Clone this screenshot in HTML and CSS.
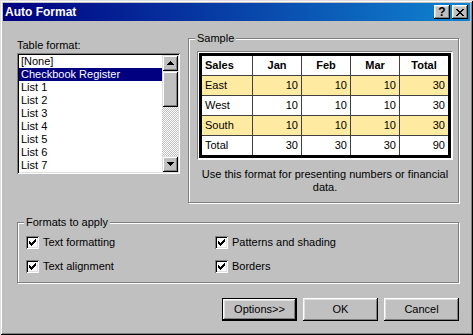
FILE: index.html
```html
<!DOCTYPE html>
<html lang="en">
<head>
    <meta charset="UTF-8">
    <title>Auto Format</title>
    <link rel="stylesheet" href="styles.css">
</head>
<body>
    <div class="window">
        <div class="titlebar">
            <span class="title">Auto Format</span>
            <div class="title-buttons">
                <button class="tbtn">?</button>
                <button class="tbtn">
                    <svg width="8" height="7" viewBox="0 0 8 7" shape-rendering="crispEdges">
                        <path d="M0 0h2v1H0z M6 0h2v1H6z M1 1h2v1H1z M5 1h2v1H5z M2 2h4v1H2z M3 3h2v1H3z M2 4h4v1H2z M1 5h2v1H1z M5 5h2v1H5z M0 6h2v1H0z M6 6h2v1H6z" fill="#000"/>
                    </svg>
                </button>
            </div>
        </div>

        <div class="dialog">
            <div class="top-row">
                <div class="format-col">
                    <label class="field-label">Table format:</label>
                    <div class="listbox">
                        <ul class="list-items">
                            <li>[None]</li>
                            <li class="selected">Checkbook Register</li>
                            <li>List 1</li>
                            <li>List 2</li>
                            <li>List 3</li>
                            <li>List 4</li>
                            <li>List 5</li>
                            <li>List 6</li>
                            <li>List 7</li>
                        </ul>
                        <div class="scrollbar">
                            <div class="scroll-btn">
                                <svg width="7" height="4" viewBox="0 0 7 4" shape-rendering="crispEdges">
                                    <path d="M3 0h1v1H3z M2 1h3v1H2z M1 2h5v1H1z M0 3h7v1H0z" fill="#000"/>
                                </svg>
                            </div>
                            <div class="scroll-thumb"></div>
                            <div class="scroll-track"></div>
                            <div class="scroll-btn">
                                <svg width="7" height="4" viewBox="0 0 7 4" shape-rendering="crispEdges">
                                    <path d="M0 0h7v1H0z M1 1h5v1H1z M2 2h3v1H2z M3 3h1v1H3z" fill="#000"/>
                                </svg>
                            </div>
                        </div>
                    </div>
                </div>

                <div class="group sample-group">
                    <span class="group-title">Sample</span>
                    <div class="sample-frame">
                        <table class="sample-table">
                            <tr>
                                <th class="first">Sales</th>
                                <th>Jan</th>
                                <th>Feb</th>
                                <th>Mar</th>
                                <th>Total</th>
                            </tr>
                            <tr class="hl">
                                <td>East</td>
                                <td class="num">10</td>
                                <td class="num">10</td>
                                <td class="num">10</td>
                                <td class="num">30</td>
                            </tr>
                            <tr>
                                <td>West</td>
                                <td class="num">10</td>
                                <td class="num">10</td>
                                <td class="num">10</td>
                                <td class="num">30</td>
                            </tr>
                            <tr class="hl">
                                <td>South</td>
                                <td class="num">10</td>
                                <td class="num">10</td>
                                <td class="num">10</td>
                                <td class="num">30</td>
                            </tr>
                            <tr>
                                <td>Total</td>
                                <td class="num">30</td>
                                <td class="num">30</td>
                                <td class="num">30</td>
                                <td class="num">90</td>
                            </tr>
                        </table>
                    </div>
                    <p class="sample-note">Use this format for presenting numbers or financial<br>data.</p>
                </div>
            </div>

            <div class="group formats-group">
                <span class="group-title">Formats to apply</span>
                <div class="check-grid">
                    <label class="check">
                        <span class="checkbox"><svg width="7" height="7" viewBox="0 0 7 7" shape-rendering="crispEdges"><path d="M6 0h1v1H6z M5 1h2v1H5z M0 2h1v1H0z M4 2h3v1H4z M0 3h2v1H0z M3 3h3v1H3z M0 4h5v1H0z M1 5h3v1H1z M2 6h1v1H2z" fill="#000"/></svg></span>
                        Text formatting
                    </label>
                    <label class="check">
                        <span class="checkbox"><svg width="7" height="7" viewBox="0 0 7 7" shape-rendering="crispEdges"><path d="M6 0h1v1H6z M5 1h2v1H5z M0 2h1v1H0z M4 2h3v1H4z M0 3h2v1H0z M3 3h3v1H3z M0 4h5v1H0z M1 5h3v1H1z M2 6h1v1H2z" fill="#000"/></svg></span>
                        Patterns and shading
                    </label>
                    <label class="check">
                        <span class="checkbox"><svg width="7" height="7" viewBox="0 0 7 7" shape-rendering="crispEdges"><path d="M6 0h1v1H6z M5 1h2v1H5z M0 2h1v1H0z M4 2h3v1H4z M0 3h2v1H0z M3 3h3v1H3z M0 4h5v1H0z M1 5h3v1H1z M2 6h1v1H2z" fill="#000"/></svg></span>
                        Text alignment
                    </label>
                    <label class="check">
                        <span class="checkbox"><svg width="7" height="7" viewBox="0 0 7 7" shape-rendering="crispEdges"><path d="M6 0h1v1H6z M5 1h2v1H5z M0 2h1v1H0z M4 2h3v1H4z M0 3h2v1H0z M3 3h3v1H3z M0 4h5v1H0z M1 5h3v1H1z M2 6h1v1H2z" fill="#000"/></svg></span>
                        Borders
                    </label>
                </div>
            </div>

            <div class="button-row">
                <button class="btn default">Options&gt;&gt;</button>
                <button class="btn">OK</button>
                <button class="btn">Cancel</button>
            </div>
        </div>
    </div>
</body>
</html>
```

FILE: styles.css
```css
* {
    margin: 0;
    padding: 0;
    box-sizing: border-box;
}

body {
    font: 11px/13px "Liberation Sans", Arial, sans-serif;
    color: #000;
    background-color: #c0c0c0;
}

button {
    font: inherit;
    color: #000;
    border: none;
}

.window {
    width: 473px;
    height: 335px;
    padding: 3px;
    background-color: #c0c0c0;
    box-shadow: inset 1px 1px #dfdfdf, inset -1px -1px #000, inset 2px 2px #fff, inset -2px -2px #808080;
}

/* title bar */
.titlebar {
    height: 18px;
    display: flex;
    align-items: center;
    justify-content: space-between;
    padding: 0 2px;
    background: linear-gradient(to right, #000080, #1084d0);
}

.title {
    color: white;
    font-size: 12px;
    font-weight: bold;
}

.title-buttons {
    display: flex;
    gap: 2px;
}

.tbtn {
    width: 16px;
    height: 14px;
    display: flex;
    align-items: center;
    justify-content: center;
    font-size: 12px;
    font-weight: bold;
    background-color: #c0c0c0;
    box-shadow: inset -1px -1px #000, inset 1px 1px #fff, inset -2px -2px #808080, inset 2px 2px #dfdfdf;
}

/* dialog body */
.dialog {
    padding: 17px 11px 0 14px;
}

.top-row {
    display: flex;
    gap: 8px;
    align-items: flex-start;
}

.format-col {
    width: 163px;
    padding-top: 1px;
}

.field-label {
    display: block;
}

.listbox {
    display: flex;
    height: 121px;
    margin-top: 1px;
    padding: 2px;
    background-color: white;
    box-shadow: inset 1px 1px #808080, inset -1px -1px #fff, inset 2px 2px #000, inset -2px -2px #dfdfdf;
}

.list-items {
    flex: 1;
    list-style: none;
}

.list-items li {
    height: 13px;
    padding-left: 2px;
    white-space: nowrap;
}

.list-items .selected {
    background-color: #000080;
    color: white;
}

.scrollbar {
    width: 16px;
    display: flex;
    flex-direction: column;
}

.scroll-btn,
.scroll-thumb {
    background-color: #c0c0c0;
    box-shadow: inset 1px 1px #dfdfdf, inset -1px -1px #000, inset 2px 2px #fff, inset -2px -2px #808080;
}

.scroll-btn {
    height: 16px;
    display: flex;
    align-items: center;
    justify-content: center;
}

.scroll-thumb {
    height: 36px;
}

.scroll-track {
    flex: 1;
    background-image: repeating-conic-gradient(#fff 0 25%, #c0c0c0 0 50%);
    background-size: 2px 2px;
}

/* group boxes */
.group {
    position: relative;
    border: 1px solid #808080;
    box-shadow: inset 1px 1px #fff, 1px 1px #fff;
}

.group-title {
    position: absolute;
    top: -7px;
    left: 6px;
    padding: 0 2px;
    background-color: #c0c0c0;
}

.sample-group {
    width: 271px;
    height: 165px;
    padding: 12px 5px 0 8px;
}

.sample-frame {
    width: 256px;
    padding: 1px;
    background-color: white;
    border: 1px solid;
    border-color: #808080 #fff #fff #808080;
}

.sample-table {
    width: 252px;
    border: 3px solid #000;
    border-spacing: 0;
    table-layout: fixed;
}

.sample-table th,
.sample-table td {
    width: 49px;
    height: 20px;
    padding: 0 3px;
    border-right: 1px solid #404040;
    border-bottom: 1px solid #404040;
    font-weight: normal;
    text-align: left;
}

.sample-table th {
    font-weight: bold;
    text-align: center;
}

.sample-table th.first {
    width: 51px;
    text-align: left;
}

.sample-table tr > :last-child {
    width: 48px;
    border-right: none;
}

.sample-table tr:last-child > * {
    height: 19px;
    border-bottom: none;
}

.sample-table .hl {
    background-color: #ffeaa2;
}

.sample-table .num {
    text-align: right;
}

.sample-note {
    margin-top: 8px;
    text-align: center;
}

.formats-group {
    height: 61px;
    margin-top: 19px;
    padding: 13px 8px 0;
}

.check-grid {
    display: grid;
    grid-template-columns: 189px auto;
    row-gap: 11px;
}

.check {
    display: flex;
    align-items: center;
    gap: 4px;
    height: 13px;
}

.checkbox {
    width: 13px;
    height: 13px;
    padding: 3px;
    display: flex;
    background-color: white;
    box-shadow: inset 1px 1px #808080, inset -1px -1px #fff, inset 2px 2px #000, inset -2px -2px #dfdfdf;
}

/* buttons */
.button-row {
    display: flex;
    justify-content: flex-end;
    gap: 6px;
    margin-top: 15px;
}

.btn {
    width: 75px;
    height: 23px;
    background-color: #c0c0c0;
    box-shadow: inset -1px -1px #000, inset 1px 1px #fff, inset -2px -2px #808080, inset 2px 2px #dfdfdf;
}

.btn.default {
    border: 1px solid #000;
}
```
